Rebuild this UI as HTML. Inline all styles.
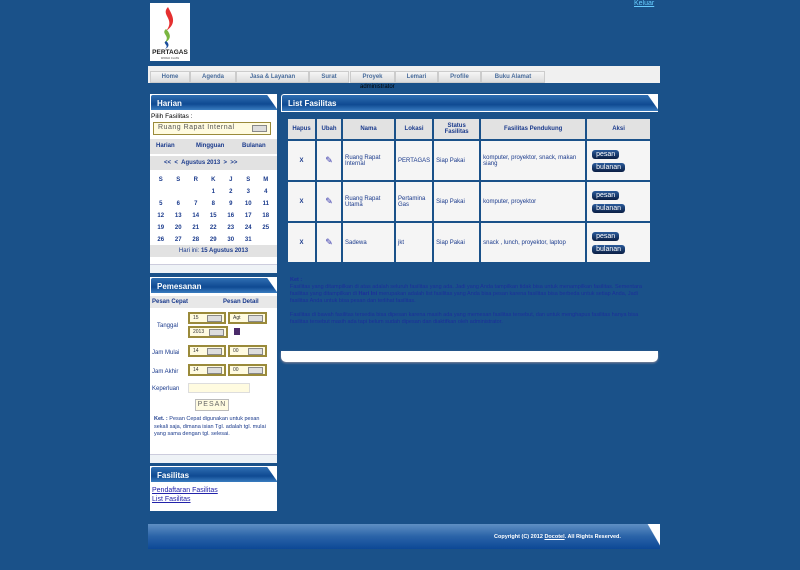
<!DOCTYPE html>
<html><head><meta charset="utf-8"><style>
*{margin:0;padding:0;box-sizing:border-box}
body{width:800px;height:570px;background:#1a5189;font-family:"Liberation Sans",Verdana,sans-serif;position:relative;overflow:hidden;font-size:7px}
.a{position:absolute}
.hdr{background:linear-gradient(#2f6fb2,#0f4a92 60%,#3a7cc0);color:#fff;font-weight:bold;font-size:8px;padding:4px 6px;border-top-left-radius:3px;border:1px solid #fff;border-right:none}
.hdr:after{content:"";position:absolute;right:0;top:0;width:12px;height:100%;background:linear-gradient(55deg,transparent 55%,#fff 58%)}
.nav{left:148px;top:66px;width:512px;height:17px;background:#f0f0f0}
.tab{position:absolute;top:5px;height:12px;background:linear-gradient(#f5f5f5,#ddd);border:1px solid #ccc;font-size:6px;color:#4a6d9c;font-weight:bold;text-align:center;line-height:10px}
.cal{font-size:6px;color:#1a3a8c;font-weight:bold}
table{border-collapse:collapse}
td,th{border:2px solid #1a5189;font-size:6px;color:#1a3a8c;padding:2px}
th{background:#e2e2e2;font-weight:bold;height:22px}
td{background:#f5f5f5;height:41px}
.btn{display:block;background:linear-gradient(#2a5a9a,#0a1e44);color:#fff;border-radius:3px;font-size:7px;padding:1px 4px;margin:4px 3px;width:max-content}
.sel{position:absolute;background:#fffbe0;border:2px solid #9a8a3a;font-size:5px;color:#333;padding:1px 3px;height:12px}
.sel i{position:absolute;right:2px;top:1px;width:15px;height:7px;background:#ddd;border:1px solid #888}
.lbl{position:absolute;font-size:6px;color:#1a3a8c}
</style></head><body>
<div class="a" style="left:150px;top:3px;width:40px;height:58px;background:#fff">
<svg width="40" height="58"><path d="M18 4c-8 8 8 12 -2 24c12-8 6-16 2-24z" fill="#e53030"/><path d="M16 26c-6 5 6 7 -2 14c9-4 6-10 2-14z" fill="#7ab640"/><path d="M16 38c-4 3 4 4 -1 8c5-2 4-6 1-8z" fill="#1a4d9c"/><text x="20" y="51" font-size="6.5" font-weight="bold" text-anchor="middle" fill="#222" font-family="Liberation Sans">PERTAGAS</text><text x="20" y="56" font-size="2.5" text-anchor="middle" fill="#444">WORLD CLASS</text></svg></div>
<div class="a" style="left:634px;top:0;font-size:7px;color:#6cf;text-decoration:underline">Keluar</div>
<div class="a nav"></div>
<div class="tab" style="left:150px;top:71px;width:40px">Home</div>
<div class="tab" style="left:190px;top:71px;width:46px">Agenda</div>
<div class="tab" style="left:236px;top:71px;width:73px">Jasa &amp; Layanan</div>
<div class="tab" style="left:309px;top:71px;width:40px">Surat</div>
<div class="tab" style="left:350px;top:71px;width:45px">Proyek</div>
<div class="tab" style="left:395px;top:71px;width:43px">Lemari</div>
<div class="tab" style="left:438px;top:71px;width:43px">Profile</div>
<div class="tab" style="left:481px;top:71px;width:64px">Buku Alamat</div>
<div class="a" style="left:360px;top:84px;font-size:6px;color:#000">administrator</div>

<!-- Harian -->
<div class="a" style="left:150px;top:94px;width:127px;height:179px;background:#fff"></div>
<div class="a hdr" style="left:150px;top:94px;width:127px;height:17px">Harian</div>
<div class="a" style="left:151px;top:113px;font-size:6.5px;color:#000">Pilih Fasilitas :</div>
<div class="a" style="left:153px;top:122px;width:118px;height:13px;background:#fffbe0;border:1.5px solid #9a8a3a;font-size:7px;color:#555;padding:1px 4px;letter-spacing:.5px">Ruang Rapat Internal<i style="position:absolute;right:3px;top:2px;width:15px;height:7px;background:#ddd;border:1px solid #888"></i></div>
<div class="a" style="left:150px;top:139px;width:127px;height:15px;background:#e2e2e2"></div>
<div class="a cal" style="left:156px;top:143px">Harian</div><div class="a cal" style="left:196px;top:143px">Mingguan</div><div class="a cal" style="left:242px;top:143px">Bulanan</div>
<div class="a" style="left:150px;top:156px;width:127px;height:14px;background:#e2e2e2"></div>
<div class="a cal" style="left:164px;top:160px">&lt;&lt; &nbsp;&lt; &nbsp;Agustus 2013 &nbsp;&gt; &nbsp;&gt;&gt;</div>
<div class="a cal" style="left:150px;top:174px;width:127px;line-height:12px">
<div style="display:grid;grid-template-columns:repeat(7,17.5px);text-align:center;padding-left:2px">
<span>S</span><span>S</span><span>R</span><span>K</span><span>J</span><span>S</span><span>M</span>
<span></span><span></span><span></span><span>1</span><span>2</span><span>3</span><span>4</span>
<span>5</span><span>6</span><span>7</span><span>8</span><span>9</span><span>10</span><span>11</span>
<span>12</span><span>13</span><span>14</span><span>15</span><span>16</span><span>17</span><span>18</span>
<span>19</span><span>20</span><span>21</span><span>22</span><span>23</span><span>24</span><span>25</span>
<span>26</span><span>27</span><span>28</span><span>29</span><span>30</span><span>31</span><span></span></div></div>
<div class="a" style="left:150px;top:245px;width:127px;height:12px;background:#e2e2e2;font-size:6px;color:#1a3a8c;text-align:center;line-height:12px">Hari ini: <b>15 Agustus 2013</b></div>
<div class="a" style="left:150px;top:264px;width:127px;height:9px;background:#eef2f6;border-top:1px solid #ccd"></div>

<!-- Pemesanan -->
<div class="a" style="left:150px;top:277px;width:127px;height:186px;background:#fff"></div>
<div class="a hdr" style="left:150px;top:277px;width:127px;height:17px">Pemesanan</div>
<div class="a" style="left:150px;top:296px;width:127px;height:12px;background:#e8e8e8"></div>
<div class="a cal" style="left:152px;top:299px">Pesan Cepat</div><div class="a cal" style="left:223px;top:299px">Pesan Detail</div>
<div class="sel" style="left:188px;top:312px;width:38px">15<i></i></div>
<div class="sel" style="left:228px;top:312px;width:39px">Agt<i></i></div>
<div class="sel" style="left:188px;top:326px;width:40px">2013<i></i></div>
<div class="a" style="left:234px;top:328px;width:6px;height:7px;background:#4a2a6a"></div>
<div class="lbl" style="left:157px;top:323px">Tanggal</div>
<div class="sel" style="left:188px;top:345px;width:38px">14<i></i></div>
<div class="sel" style="left:228px;top:345px;width:39px">00<i></i></div>
<div class="lbl" style="left:152px;top:350px">Jam Mulai</div>
<div class="sel" style="left:188px;top:364px;width:38px">14<i></i></div>
<div class="sel" style="left:228px;top:364px;width:39px">00<i></i></div>
<div class="lbl" style="left:152px;top:369px">Jam Akhir</div>
<div class="lbl" style="left:152px;top:386px">Keperluan</div>
<div class="a" style="left:188px;top:383px;width:62px;height:10px;background:#fffbe0;border:1px solid #ddd"></div>
<div class="a" style="left:195px;top:399px;width:34px;height:12px;background:#fffbe0;border:1px solid #bbb;font-size:7px;color:#666;text-align:center;letter-spacing:1px;line-height:10px">PESAN</div>
<div class="a" style="left:154px;top:416px;width:120px;font-size:5.5px;color:#1a3a8c;line-height:7.5px"><b>Ket. :</b> Pesan Cepat digunakan untuk pesan sekali saja, dimana isian Tgl. adalah tgl. mulai yang sama dengan tgl. selesai.</div>
<div class="a" style="left:150px;top:454px;width:127px;height:9px;background:#eef2f6;border-top:1px solid #ccd"></div>

<!-- Fasilitas -->
<div class="a" style="left:150px;top:466px;width:127px;height:45px;background:#fff"></div>
<div class="a hdr" style="left:150px;top:466px;width:127px;height:17px">Fasilitas</div>
<div class="a" style="left:152px;top:487px;font-size:7px;color:#2222aa;text-decoration:underline;line-height:8.5px">Pendaftaran Fasilitas<br>List Fasilitas</div>

<!-- main -->
<div class="a hdr" style="left:281px;top:94px;width:377px;height:18px">List Fasilitas</div>
<table class="a" style="left:286px;top:117px;width:366px">
<tr><th style="width:29px">Hapus</th><th style="width:26px">Ubah</th><th style="width:53px">Nama</th><th style="width:38px">Lokasi</th><th style="width:47px">Status Fasilitas</th><th style="width:106px">Fasilitas Pendukung</th><th>Aksi</th></tr>
<tr><td style="text-align:center"><b>X</b></td><td style="text-align:center;color:#33a;font-size:9px">✎</td><td>Ruang Rapat Internal</td><td>PERTAGAS</td><td>Siap Pakai</td><td>komputer, proyektor, snack, makan siang</td><td><span class="btn">pesan</span><span class="btn">bulanan</span></td></tr>
<tr><td style="text-align:center"><b>X</b></td><td style="text-align:center;color:#33a;font-size:9px">✎</td><td>Ruang Rapat Utama</td><td>Pertamina Gas</td><td>Siap Pakai</td><td>komputer, proyektor</td><td><span class="btn">pesan</span><span class="btn">bulanan</span></td></tr>
<tr><td style="text-align:center"><b>X</b></td><td style="text-align:center;color:#33a;font-size:9px">✎</td><td>Sadewa</td><td>jkt</td><td>Siap Pakai</td><td>snack , lunch, proyektor, laptop</td><td><span class="btn">pesan</span><span class="btn">bulanan</span></td></tr>
</table>
<div class="a" style="left:290px;top:277px;width:360px;font-size:5.5px;color:#1c2f9a;line-height:7px"><b>Ket :</b><br>Fasilitas yang ditampilkan di atas adalah seluruh fasilitas yang ada. Jadi yang Anda tampilkan tidak bisa untuk menampilkan fasilitas. Sementara fasilitas yang ditampilkan di <b>Hari Ini</b> merupakan adalah list fasilitas yang Anda bisa pesan karena fasilitas bisa berbeda untuk setiap Anda, Jadi fasilitas Anda untuk bisa pesan dan terlihat fasilitas.<br><br>Fasilitas di bawah fasilitas tersedia bisa dipesan karena masih ada yang memesan fasilitas tersebut, dan untuk menghapus fasilitas hanya bisa fasilitas tersebut masih ada tapi belum sudah dipesan dan diaktifkan oleh administrator.</div>
<div class="a" style="left:281px;top:351px;width:377px;height:11px;background:#fff;border-radius:0 0 5px 5px;box-shadow:0 1px 2px #889"></div>

<div class="a" style="left:148px;top:524px;width:512px;height:25px;background:linear-gradient(#5f8fc3,#2a63a8 50%,#0c4896)"></div>
<div class="a" style="left:646px;top:524px;width:14px;height:25px;background:linear-gradient(60deg,transparent 55%,#fff 58%)"></div>
<div class="a" style="left:494px;top:534px;font-size:5.5px;color:#fff;font-weight:bold">Copyright (C) 2012 <u>Docotel</u>. All Rights Reserved.</div>
</body></html>
